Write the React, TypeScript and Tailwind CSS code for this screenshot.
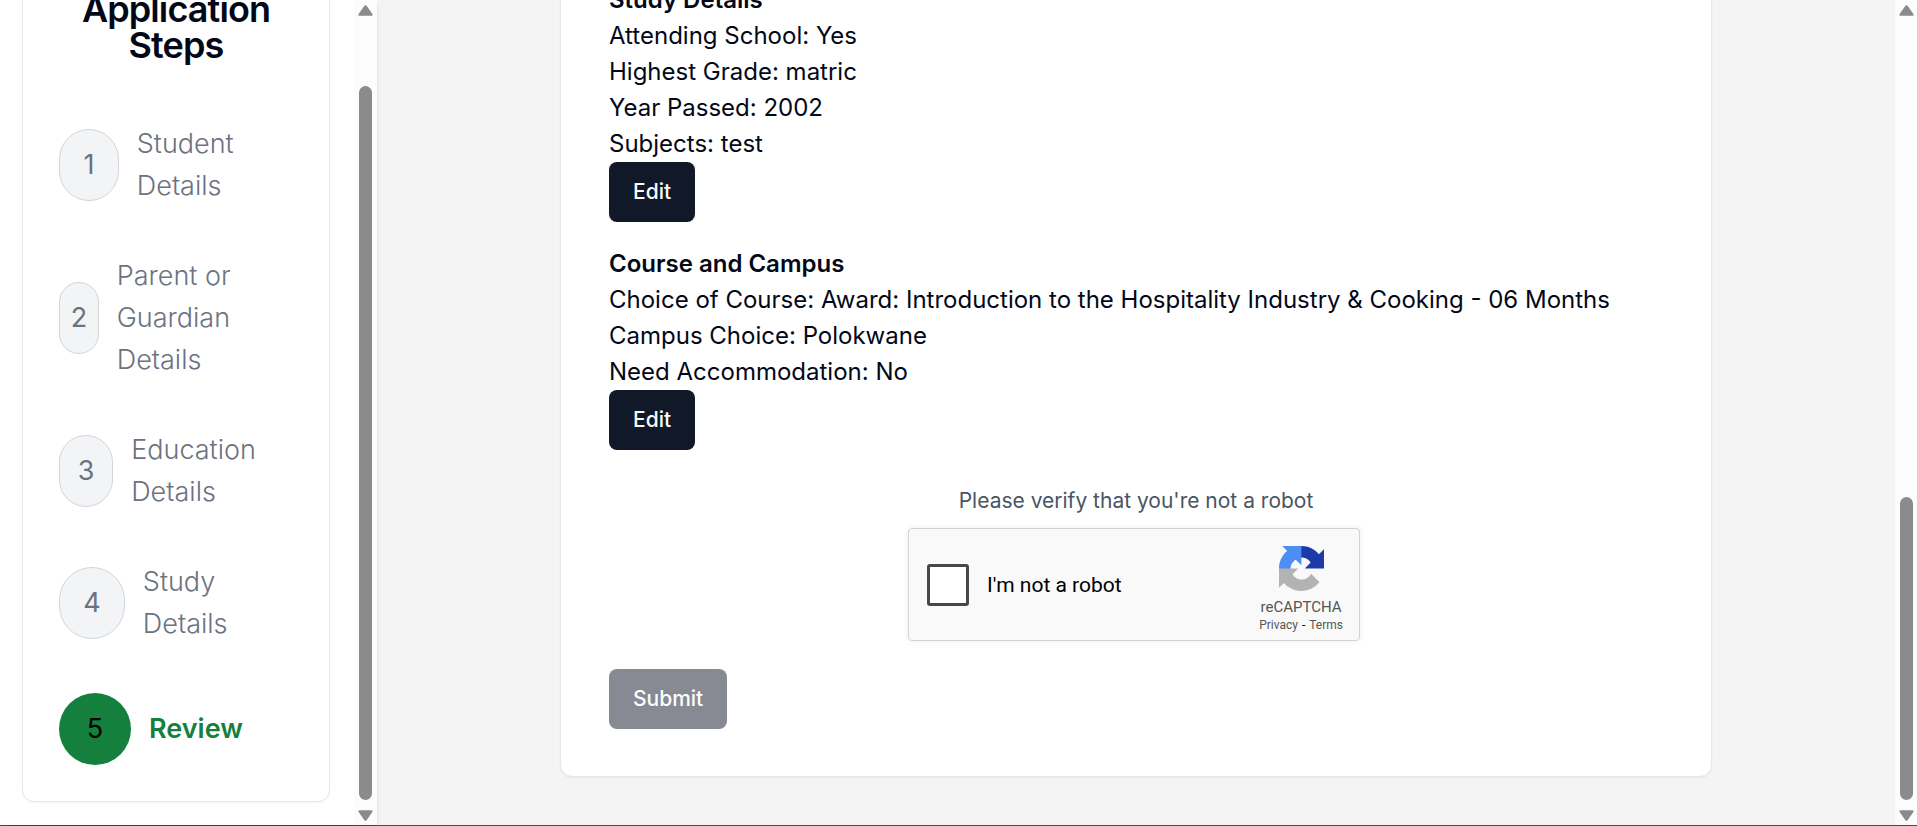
import React from "react";

type Step = { number: number; label: string; active?: boolean };

const steps: Step[] = [
  { number: 1, label: "Student Details" },
  { number: 2, label: "Parent or Guardian Details" },
  { number: 3, label: "Education Details" },
  { number: 4, label: "Study Details" },
  { number: 5, label: "Review", active: true },
];

type Section = { title: string; rows: [string, string][] };

const sections: Section[] = [
  {
    title: "Study Details",
    rows: [
      ["Attending School", "Yes"],
      ["Highest Grade", "matric"],
      ["Year Passed", "2002"],
      ["Subjects", "test"],
    ],
  },
  {
    title: "Course and Campus",
    rows: [
      ["Choice of Course", "Award: Introduction to the Hospitality Industry & Cooking - 06 Months"],
      ["Campus Choice", "Polokwane"],
      ["Need Accommodation", "No"],
    ],
  },
];

function Arrow({ down = false }: { down?: boolean }) {
  return (
    <svg viewBox="0 0 15 11" className="block h-[11px] w-[15px] shrink-0" aria-hidden="true">
      <path
        d={
          down
            ? "M1.6.2h11.8c1.1 0 1.6 1.1 1 1.9L8.6 10.2c-.6.8-1.6.8-2.2 0L.6 2.1C0 1.3.5.2 1.6.2z"
            : "M1.6 10.8h11.8c1.1 0 1.6-1.1 1-1.9L8.6.8c-.6-.8-1.6-.8-2.2 0L.6 8.9c-.6.8-.1 1.9 1 1.9z"
        }
        fill="#8b8b8b"
      />
    </svg>
  );
}

function Scrollbar({ width, spacer, thumb }: { width: string; spacer: string; thumb: string }) {
  return (
    <div className={`flex shrink-0 flex-col items-center bg-[#fcfcfc] pt-[5px] pb-1 ${width}`} aria-hidden="true">
      <Arrow />
      <div className={spacer} />
      <div className={`w-[13px] basis-0 rounded-full bg-[#8b8b8b] ${thumb}`} />
      <div className="h-[10px] shrink-0" />
      <Arrow down />
    </div>
  );
}

function StepItem({ step }: { step: Step }) {
  return (
    <li className="flex items-center gap-[18px]">
      <span
        className={
          step.active
            ? "flex h-[72px] w-[72px] items-center justify-center rounded-full bg-[#15803d] text-black"
            : "flex h-[72px] w-[72px] items-center justify-center rounded-full border border-[#d1d5db] bg-[#f3f4f6] text-[#6b7280]"
        }
      >
        {step.number}
      </span>
      <span className={step.active ? "font-semibold text-[#15803d]" : "font-light text-[#6b7280]"}>
        {step.label}
      </span>
    </li>
  );
}

function Sidebar() {
  return (
    <aside className="z-10 flex w-[377px] shrink-0 bg-white shadow-md">
      <div className="flex flex-1 flex-col justify-end overflow-hidden pr-6 pb-[23px] pl-[22px]">
        <nav className="shrink-0 rounded-xl border border-[#e5e7eb] p-9 shadow-xs">
          <h2 className="mb-[60px] text-center text-[36px] leading-none font-semibold tracking-tight">
            Application Steps
          </h2>
          <ol className="flex flex-col gap-12 text-[27px] leading-[42px]">
            {steps.map((step) => (
              <StepItem key={step.number} step={step} />
            ))}
          </ol>
        </nav>
      </div>
      <Scrollbar width="w-[23px]" spacer="h-[70px] shrink-0" thumb="grow" />
    </aside>
  );
}

function RecaptchaLogo() {
  return (
    <svg viewBox="0 0 64 64" className="block size-[45px]" aria-hidden="true">
      <path
        fill="#1c3aa9"
        d="M64 31.955l-.033-1.37V4.687l-7.16 7.16C50.948 4.674 42.033.093 32.05.093c-10.4 0-19.622 4.96-25.458 12.64l11.736 11.86a15.55 15.55 0 0 1 4.754-5.334c2.05-1.6 4.952-2.906 8.968-2.906.485 0 .86.057 1.135.163 4.976.393 9.288 3.14 11.828 7.124l-8.307 8.307L64 31.953"
      />
      <path
        fill="#4c8df6"
        d="M31.862.094l-1.37.033H4.594l7.16 7.16C4.58 13.147 0 22.06 0 32.046c0 10.4 4.96 19.622 12.64 25.458L24.5 45.768a15.55 15.55 0 0 1-5.334-4.754c-1.6-2.05-2.906-4.952-2.906-8.968 0-.485.057-.86.163-1.135.393-4.976 3.14-9.288 7.124-11.828l8.307 8.307L31.86.095"
      />
      <path
        fill="#b3b3b3"
        d="M.001 32.045l.033 1.37v25.898l7.16-7.16c5.86 7.173 14.774 11.754 24.76 11.754 10.4 0 19.622-4.96 25.458-12.64l-11.736-11.86a15.55 15.55 0 0 1-4.754 5.334c-2.05 1.6-4.952 2.906-8.968 2.906-.485 0-.86-.057-1.135-.163-4.976-.393-9.288-3.14-11.828-7.124l8.307-8.307L.001 32.045"
      />
    </svg>
  );
}

function Recaptcha() {
  return (
    <div className="w-[456px] pr-1 pb-1 font-[Roboto,sans-serif]">
      <div className="flex h-[113px] items-center rounded-[4px] border border-[#d3d3d3] bg-[#f9f9f9] pr-4 pl-[18px] shadow-[0_0_6px_rgba(0,0,0,0.08)]">
        <input
          id="not-a-robot"
          type="checkbox"
          className="size-[42px] shrink-0 appearance-none rounded-[3px] border-3 border-[#474747] bg-white"
        />
        <label htmlFor="not-a-robot" className="flex-1 pl-[18px] text-[21px] leading-[26px] text-black">
          I'm not a robot
        </label>
        <div className="flex flex-col items-center pt-[9px] text-[#555555]">
          <RecaptchaLogo />
          <span className="mt-[6px] text-[15px] leading-[20px]">reCAPTCHA</span>
          <span className="text-[12px] leading-[16px]">
            <a href="#privacy">Privacy</a>
            <span className="px-1 text-black">-</span>
            <a href="#terms">Terms</a>
          </span>
        </div>
      </div>
    </div>
  );
}

const buttonClass =
  "h-[60px] rounded-lg bg-[#111827] px-6 text-[21px] leading-[30px] font-medium text-[#f8fafc] disabled:opacity-50";

function ReviewSection({ section }: { section: Section }) {
  return (
    <section>
      <h3 className="font-semibold">{section.title}</h3>
      {section.rows.map(([name, value]) => (
        <p key={name}>
          {name}: {value}
        </p>
      ))}
      <button type="button" className={`block ${buttonClass}`}>
        Edit
      </button>
    </section>
  );
}

export default function App() {
  return (
    <div className="flex h-screen flex-col overflow-hidden bg-[#f4f4f4] font-[Inter,sans-serif] text-[#020817]">
      <div className="flex min-h-0 flex-1">
        <Sidebar />
        <main className="flex min-w-0 flex-1 flex-col justify-end overflow-hidden px-12 pb-12">
          <form className="mx-auto w-full max-w-6xl shrink-0 rounded-xl border border-[#e5e7eb] bg-white p-12 pb-[47px] shadow-xs">
            <div className="flex flex-col gap-6 text-[24px] leading-[36px]">
              {sections.map((section) => (
                <ReviewSection key={section.title} section={section} />
              ))}
            </div>
            <div className="mt-9 mb-6 flex flex-col items-center gap-3">
              <p className="text-[21px] leading-[30px] text-[#4b5563]">Please verify that you're not a robot</p>
              <Recaptcha />
            </div>
            <button type="submit" disabled className={`block ${buttonClass}`}>
              Submit
            </button>
          </form>
        </main>
        <Scrollbar width="w-[22px]" spacer="basis-0 grow-[480]" thumb="grow-[303]" />
      </div>
      <div className="h-px shrink-0 bg-[#444b55]" />
    </div>
  );
}
